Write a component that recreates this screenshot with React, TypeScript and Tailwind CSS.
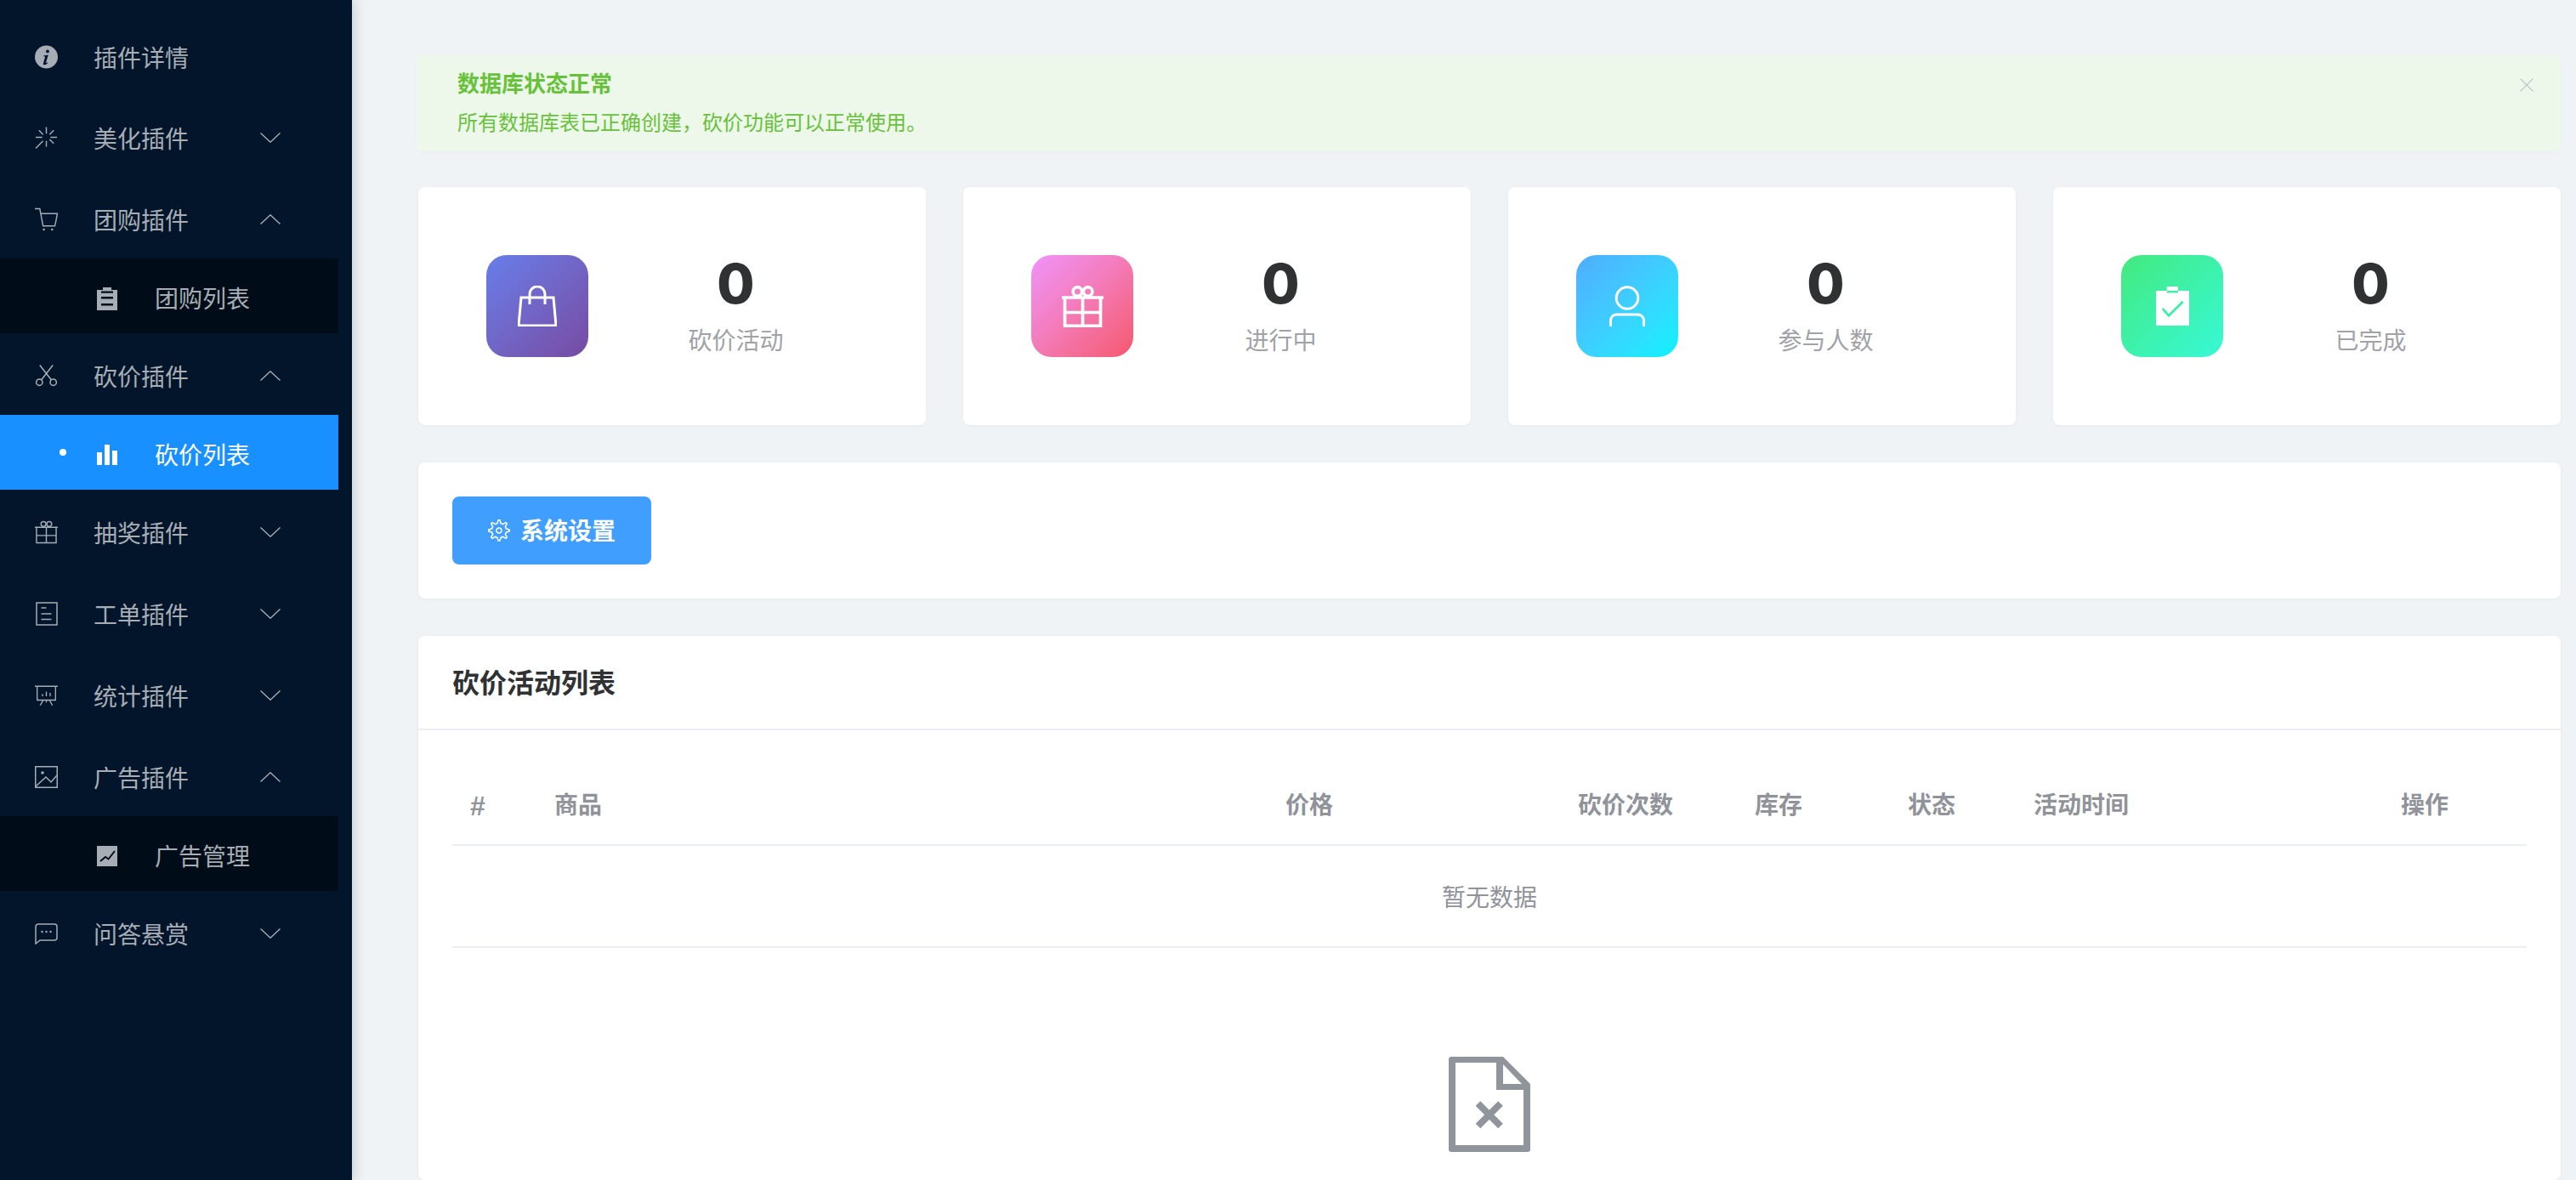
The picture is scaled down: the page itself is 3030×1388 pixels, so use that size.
import type { ReactNode } from 'react';
import { TfiClose, TfiSettings } from 'react-icons/tfi';

const font = { fontFamily: '"Liberation Sans", "Noto Sans CJK SC", sans-serif' };

function InfoIcon() {
  return (
    <svg width="28" height="28" viewBox="0 0 28 28">
      <circle cx="14" cy="14" r="14" fill="currentColor" />
      <circle cx="15.5" cy="7.2" r="2" fill="#02152b" />
      <path
        fill="#02152b"
        d="M10.5 12.5l5.8-1-2.8 9.6c-.2.7.5.7 1.8-.5l.6.6c-1.5 1.8-3 2.5-4.3 2.5-1.3 0-1.6-1-1.2-2.3l2-7.2c.2-.8-.4-1-1.9-.9z"
      />
    </svg>
  );
}

function ShineIcon() {
  return (
    <svg width="28" height="28" viewBox="0 0 28 28" fill="none" stroke="currentColor" strokeWidth="1.5">
      <path d="M14 1v8M14 18v7M1 13.5h8M19 13.5h8M23 5l-5 5M5 5l5 5M18 16l5 5M1 27l9-9" />
    </svg>
  );
}

function CartIcon() {
  return (
    <svg width="28" height="28" viewBox="0 0 28 28" fill="none" stroke="currentColor" strokeWidth="1.5">
      <path d="M0 1h6l4 21h15M6.5 7h21l-3 15" />
      <circle cx="11" cy="26.5" r="1.3" fill="currentColor" stroke="none" />
      <circle cx="21" cy="26.5" r="1.3" fill="currentColor" stroke="none" />
    </svg>
  );
}

function ClipboardIcon() {
  return (
    <svg width="24" height="27" viewBox="0 0 24 27">
      <path fill="currentColor" d="M7 0h10v3h7v24H0V3h7z" />
      <path fill="#000c17" d="M5 4.5h14v2.3H5zM5 11h14v2.5H5zM5 19h14v2.5H5z" />
    </svg>
  );
}

function ScissorsIcon() {
  return (
    <svg width="28" height="28" viewBox="0 0 28 28" fill="none" stroke="currentColor" strokeWidth="1.6">
      <circle cx="5.5" cy="22" r="3.8" />
      <circle cx="22.5" cy="22" r="3.8" />
      <path d="M8 19L22 1M20 19L6 1" />
    </svg>
  );
}

function BarsIcon() {
  return (
    <svg width="24" height="24" viewBox="0 0 24 24" fill="currentColor">
      <path d="M0 9h6v15H0zM9 0h6v24H9zM18 7h6v17h-6z" />
    </svg>
  );
}

function GiftIcon({ size, stroke }: { size: number; stroke: number }) {
  return (
    <svg width={size} height={size} viewBox="0 0 28 28" fill="none" stroke="currentColor" strokeWidth={stroke}>
      <path d="M0 8h28M2 8v19h24V8M14 8v19M2 18h24" />
      <circle cx="10.5" cy="4" r="3" />
      <circle cx="17.5" cy="4" r="3" />
    </svg>
  );
}

function ReceiptIcon() {
  return (
    <svg width="26" height="28" viewBox="0 0 26 28" fill="none" stroke="currentColor" strokeWidth="1.5">
      <rect x="1" y="1" width="24" height="26" />
      <path d="M6.5 7h6M6.5 14h12M6.5 20.5h12" />
    </svg>
  );
}

function BoardIcon() {
  return (
    <svg width="30" height="27" viewBox="0 0 30 27" fill="none" stroke="currentColor" strokeWidth="1.5">
      <path d="M0 1h30M3 1v18h24V1M11 19l-4 7M19 19l4 7M15 19v3M10 11v3M15 8v6M20 9.5V14" />
    </svg>
  );
}

function ImageIcon() {
  return (
    <svg width="27" height="26" viewBox="0 0 27 26" fill="none" stroke="currentColor" strokeWidth="1.5">
      <rect x=".75" y=".75" width="25.5" height="24.5" />
      <circle cx="9" cy="8" r="1.8" fill="currentColor" stroke="none" />
      <path d="M1 24l12-11 6 6 7-8" />
    </svg>
  );
}

function TrendIcon() {
  return (
    <svg width="24" height="24" viewBox="0 0 24 24">
      <rect width="24" height="24" fill="currentColor" />
      <path d="M4 18l6-5 3.5 2.5L21 6" fill="none" stroke="#000c17" strokeWidth="2" />
    </svg>
  );
}

function CommentIcon() {
  return (
    <svg width="27" height="25" viewBox="0 0 27 25" fill="none" stroke="currentColor" strokeWidth="1.5">
      <path d="M4 1h19a3 3 0 0 1 3 3v13a3 3 0 0 1-3 3H6l-5 4V4a3 3 0 0 1 3-3z" />
      <circle cx="8.5" cy="10" r="1.2" fill="currentColor" stroke="none" />
      <circle cx="13.5" cy="10" r="1.2" fill="currentColor" stroke="none" />
      <circle cx="18.5" cy="10" r="1.2" fill="currentColor" stroke="none" />
    </svg>
  );
}

function Chevron({ up }: { up?: boolean }) {
  return (
    <svg width="24" height="12" viewBox="0 0 24 12" fill="none" stroke="currentColor" strokeWidth="1.4">
      <path d={up ? 'M.5 11.5L12 .8l11.5 10.7' : 'M.5.5L12 11.2 23.5.5'} />
    </svg>
  );
}

function BagIcon() {
  return (
    <svg width="46" height="48" viewBox="0 0 46 48" fill="none" stroke="currentColor" strokeWidth="3">
      <path d="M4 14h38l3 33H1zM14 22V10a9 9 0 0 1 18 0v12" />
    </svg>
  );
}

function UserIcon() {
  return (
    <svg width="42" height="48" viewBox="0 0 42 48" fill="none" stroke="currentColor" strokeWidth="3">
      <circle cx="21" cy="14.5" r="12.8" />
      <path d="M1.5 48v-7a7 7 0 0 1 7-7h25a7 7 0 0 1 7 7v7" />
    </svg>
  );
}

function ClipboardCheck() {
  return (
    <svg width="39" height="46" viewBox="0 0 39 46">
      <path fill="#fff" d="M12.7 0H26v5h13v41H0V5h12.7z" />
      <path fill="#3ef0a8" d="M12.7 5H26v2.5H12.7z" />
      <path d="M7.7 26l7.3 8.3L31.7 17.7" fill="none" stroke="#3ef0a8" strokeWidth="2.8" />
    </svg>
  );
}

function MenuTitle({ icon, label, open }: { icon: ReactNode; label: string; open?: boolean }) {
  return (
    <div className="flex h-[88px] items-center pl-[41px] pr-[68px] text-[28px] text-[#a6adb4]">
      <span className="flex w-[27px] justify-center">{icon}</span>
      <span className="ml-[42px] pt-[5px]">{label}</span>
      {open === undefined ? null : (
        <span className="ml-auto">
          <Chevron up={open} />
        </span>
      )}
    </div>
  );
}

function SubItem({ icon, label, active }: { icon: ReactNode; label: string; active?: boolean }) {
  return (
    <div
      className={
        active
          ? 'relative flex h-[88px] items-center bg-[#1890ff] pl-[114px] pt-[6px] text-[28px] text-white'
          : 'relative flex h-[88px] items-center bg-[#000c17] pl-[114px] pt-[6px] text-[28px] text-[#a6adb4]'
      }
    >
      {active && <span className="absolute left-[70px] top-[40px] h-2 w-2 rounded-full bg-white" />}
      <span className="flex w-[24px] justify-center">{icon}</span>
      <span className="ml-[44px] pt-[4px]">{label}</span>
    </div>
  );
}

function Sidebar() {
  return (
    <aside className="z-10 h-full w-[414px] shrink-0 bg-[#02152b] pr-4 pt-[23px] shadow-[2px_0_14px_rgba(0,21,41,0.18)]">
      <MenuTitle icon={<InfoIcon />} label="插件详情" />
      <div className="mt-[7px]">
        <MenuTitle icon={<ShineIcon />} label="美化插件" open={false} />
      </div>
      <div className="mt-2">
        <MenuTitle icon={<CartIcon />} label="团购插件" open />
      </div>
      <div className="mt-[2px]">
        <SubItem icon={<ClipboardIcon />} label="团购列表" />
      </div>
      <div className="mt-[6px]">
        <MenuTitle icon={<ScissorsIcon />} label="砍价插件" open />
      </div>
      <div className="mt-[2px]">
        <SubItem icon={<BarsIcon />} label="砍价列表" active />
      </div>
      <div className="mt-[6px]">
        <MenuTitle icon={<GiftIcon size={28} stroke={1.5} />} label="抽奖插件" open={false} />
      </div>
      <div className="mt-2">
        <MenuTitle icon={<ReceiptIcon />} label="工单插件" open={false} />
      </div>
      <div className="mt-2">
        <MenuTitle icon={<BoardIcon />} label="统计插件" open={false} />
      </div>
      <div className="mt-2">
        <MenuTitle icon={<ImageIcon />} label="广告插件" open />
      </div>
      <div className="mt-[2px]">
        <SubItem icon={<TrendIcon />} label="广告管理" />
      </div>
      <div className="mt-[6px]">
        <MenuTitle icon={<CommentIcon />} label="问答悬赏" open={false} />
      </div>
    </aside>
  );
}

const stats = [
  { label: '砍价活动', icon: <BagIcon />, tile: 'bg-linear-to-br from-[#667eea] to-[#764ba2]' },
  { label: '进行中', icon: <GiftIcon size={49} stroke={2.1} />, tile: 'bg-linear-to-br from-[#f093fb] to-[#f5576c]' },
  { label: '参与人数', icon: <UserIcon />, tile: 'bg-linear-to-br from-[#4facfe] to-[#00f2fe]' },
  { label: '已完成', icon: <ClipboardCheck />, tile: 'bg-linear-to-br from-[#43e97b] to-[#38f9d7]' },
];

function StatCard({ label, icon, tile }: { label: string; icon: ReactNode; tile: string }) {
  return (
    <div className="flex h-[280px] items-center rounded-lg bg-white px-[80px] shadow-[0_1px_4px_rgba(0,0,0,0.04)]">
      <div className={`flex h-[120px] w-[120px] shrink-0 items-center justify-center rounded-[24px] text-white ${tile}`}>
        {icon}
      </div>
      <div className="ml-[30px] flex-1 text-center">
        <div className="font-['Inter'] text-[64px] font-extrabold leading-[72px] text-[#303133]">0</div>
        <div className="mt-[12px] text-[28px] leading-[40px] text-[#a0a2a8]">{label}</div>
      </div>
    </div>
  );
}

function EmptyFile() {
  return (
    <svg width="96" height="112" viewBox="0 0 96 112" className="text-[#90949b]">
      <path
        fill="currentColor"
        fillRule="evenodd"
        d="M3 0h61l32 32v77a3 3 0 0 1-3 3H3a3 3 0 0 1-3-3V3a3 3 0 0 1 3-3zM8 7v97h80V39H56V7zM64 9v23h22z"
      />
      <path d="M34.5 55l26.5 26.5M61 55L34.5 81.5" stroke="currentColor" strokeWidth="8" fill="none" />
    </svg>
  );
}

const columns = [
  { label: '#', cls: 'text-center text-[32px]' },
  { label: '商品', cls: 'pl-[60px]' },
  { label: '价格', cls: 'text-center' },
  { label: '砍价次数', cls: 'text-center' },
  { label: '库存', cls: 'text-center' },
  { label: '状态', cls: 'text-center' },
  { label: '活动时间', cls: 'pl-[30px]' },
  { label: '操作', cls: 'text-center' },
];

export default function App() {
  return (
    <div className="flex h-screen overflow-hidden bg-[#eff3f6]" style={font}>
      <Sidebar />
      <main className="flex min-w-0 flex-1 flex-col pl-[78px] pr-[18px] pt-[64px]">
        <div className="relative -ml-[2px] h-[114px] rounded-lg bg-[#edf8ea] pl-[48px] pt-[17px] text-[#67c23a] shadow-[0_2px_4px_rgba(0,0,0,0.02)]">
          <div className="text-[26px] font-bold leading-[36px]">数据库状态正常</div>
          <div className="mt-[11px] text-[24px] leading-[34px]">所有数据库表已正确创建，砍价功能可以正常使用。</div>
          <TfiClose className="absolute right-[31px] top-[27px] text-[18px] text-[#b8bcc4]" />
        </div>

        <div className="mt-[42px] grid grid-cols-4 gap-[44px]">
          {stats.map((s) => (
            <StatCard key={s.label} label={s.label} icon={s.icon} tile={s.tile} />
          ))}
        </div>

        <div className="mt-[44px] h-[160px] rounded-lg bg-white px-[40px] pt-[40px] shadow-[0_1px_4px_rgba(0,0,0,0.04)]">
          <button className="flex h-[80px] w-[234px] items-center justify-center rounded-lg bg-[#409eff] text-[28px] font-bold text-white">
            <TfiSettings className="text-[26px]" />
            <span className="ml-[12px] pt-[4px]">系统设置</span>
          </button>
        </div>

        <div className="mt-[44px] flex-1 rounded-lg bg-white shadow-[0_1px_4px_rgba(0,0,0,0.04)]">
          <div className="flex h-[111px] items-center border-b-2 border-[#ebeef5] pl-[40px] pt-[2px] text-[32px] font-bold text-[#303133]">
            砍价活动列表
          </div>
          <div className="px-[40px]">
            <div className="mt-[43px] grid h-[93px] grid-cols-[60px_666px_564px_180px_180px_180px_370px_240px] items-center border-b-2 border-[#ebeef5] text-[28px] font-bold text-[#909399]">
              {columns.map((c) => (
                <div key={c.label} className={c.cls}>
                  {c.label}
                </div>
              ))}
            </div>
            <div className="flex h-[120px] items-center justify-center border-b-2 border-[#ebeef5] pt-[6px] text-[28px] text-[#909399]">
              暂无数据
            </div>
            <div className="mt-[128px] flex justify-center">
              <EmptyFile />
            </div>
          </div>
        </div>
      </main>
    </div>
  );
}
